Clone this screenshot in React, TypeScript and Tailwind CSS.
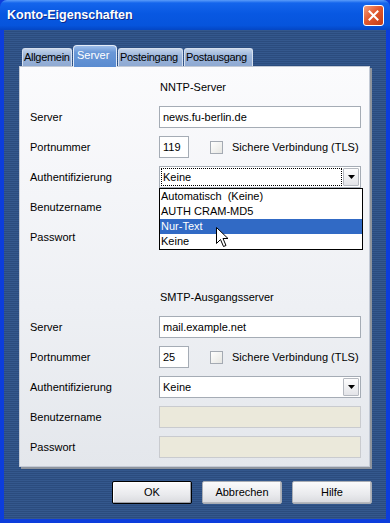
import React from "react";

function Input({ value, w = "w-[202px]", disabled = false }: { value?: string; w?: string; disabled?: boolean }) {
  return (
    <div
      className={`${w} h-[22px] border flex items-center pl-[3px] ${
        disabled ? "bg-[#ebe9db] border-[#c9cbcf]" : "bg-white border-[#a5acb5]"
      }`}
    >
      {value}
    </div>
  );
}

function DropBtn() {
  return (
    <div className="w-[16px] h-[18px] border border-[#b5b9c0] rounded-[1px] bg-[linear-gradient(180deg,#fdfdfd,#e3e4e8)] flex items-center justify-center">
      <svg width="7" height="4" viewBox="0 0 7 4">
        <path d="M0 0 H7 L3.5 4 Z" fill="#000" />
      </svg>
    </div>
  );
}

function Select({ focused = false }: { focused?: boolean }) {
  return (
    <div className="w-[202px] h-[22px] bg-white border border-[#a5acb5] flex items-center p-[1px] gap-[1px]">
      {focused ? (
        <div className="flex-1 h-full border border-dotted border-black flex items-center pl-[1px]">Keine</div>
      ) : (
        <div className="flex-1 h-full flex items-center pl-[2px]">Keine</div>
      )}
      <DropBtn />
    </div>
  );
}

function Checkbox() {
  return (
    <div className="flex items-center ml-[21px]">
      <div className="w-[13px] h-[13px] border border-[#a4aab3] bg-[linear-gradient(135deg,#ffffff,#e6e6e2)]" />
      <span className="ml-[9px]">Sichere Verbindung (TLS)</span>
    </div>
  );
}

function Row({ label, children }: { label?: string; children?: React.ReactNode }) {
  return (
    <div className="h-[22px] flex items-center">
      <div className="w-[129px] shrink-0">{label}</div>
      {children}
    </div>
  );
}

function Cursor() {
  return (
    <svg width="13" height="21" viewBox="0 0 13 21" className="absolute left-[56px] top-[38px]">
      <path
        d="M0.5 0.5 L0.5 16.5 L4.5 12.5 L7.5 19.5 L10 18.5 L7 11.5 L12 11.5 Z"
        fill="#fff"
        stroke="#000"
        strokeWidth="1"
        strokeLinejoin="miter"
      />
    </svg>
  );
}

function Tab({ label, w, selected = false }: { label: string; w: string; selected?: boolean }) {
  if (selected) {
    return (
      <div
        className={`${w} h-[22px] mb-[-1px] relative z-10 rounded-t-[4px] border border-b-0 border-[#e4ecf8] bg-[linear-gradient(180deg,#9cbdea_0%,#6a98d8_30%,#5a8bd0_100%)] text-white flex items-start pt-[3px] pl-[3px] whitespace-nowrap`}
      >
        {label}
      </div>
    );
  }
  return (
    <div
      className={`${w} h-[18px] rounded-t-[3px] border border-b-0 border-[#d6e0ef] bg-[linear-gradient(180deg,#c3d3ea_0%,#9fb8dc_35%,#8ea9d2_100%)] text-black flex items-start pt-[2px] pl-[1px] whitespace-nowrap tracking-[-0.3px] overflow-visible`}
    >
      {label}
    </div>
  );
}

function Btn({ label, def = false }: { label: string; def?: boolean }) {
  return (
    <div
      className={`w-[80px] h-[23px] rounded-[2px] flex items-center justify-center bg-[linear-gradient(180deg,#fbfbfc,#e9eaed_60%,#d9dade)] ${
        def ? "border border-black shadow-[inset_1px_1px_0_#ffffff,inset_-1px_-1px_0_#9a9ea6]" : "border border-[#a9adb4] shadow-[inset_-1px_-1px_0_#b5b8be]"
      }`}
    >
      {label}
    </div>
  );
}

export default function App() {
  return (
    <div className="w-[390px] h-[523px] flex flex-col [font-family:'Liberation_Sans',Arial,sans-serif] text-[11px] leading-[13px] text-black select-none bg-[#0c3ddc]">
      {/* Title bar */}
      <div className="h-[30px] shrink-0 rounded-t-[7px] bg-[linear-gradient(180deg,#5a9cfa_0%,#1465ec_10%,#0858e2_45%,#0654dc_85%,#0446c4_100%)] flex items-center justify-between pl-[7px] pr-[6px]">
        <span className="text-white font-bold text-[12.5px] leading-[16px] [text-shadow:1px_1px_0_#0a2a8e]">
          Konto-Eigenschaften
        </span>
        <div className="w-[21px] h-[21px] rounded-[3px] border border-white bg-[linear-gradient(135deg,#f3a07f_0%,#e2592f_45%,#c23c16_100%)] flex items-center justify-center">
          <svg width="11" height="11" viewBox="0 0 11 11">
            <path d="M1.5 1.5 L9.5 9.5 M9.5 1.5 L1.5 9.5" stroke="#fff" strokeWidth="2" strokeLinecap="square" />
          </svg>
        </div>
      </div>

      {/* Client */}
      <div className="flex-1 border-x-4 border-b-4 border-[#0c3ddc] bg-[repeating-linear-gradient(180deg,#34588d_0px,#34588d_1px,#2b4c7e_1px,#2b4c7e_2px)] flex flex-col pl-[15px] pr-[14px] pt-[15px]">
        {/* Tabs */}
        <div className="h-[21px] flex items-end gap-[1px] pl-[3px]">
          <Tab label="Allgemein" w="w-[50px]" />
          <Tab label="Server" w="w-[44px]" selected />
          <Tab label="Posteingang" w="w-[65px]" />
          <Tab label="Postausgang" w="w-[69px]" />
        </div>

        {/* Panel */}
        <div className="w-[351px] h-[401px] relative border border-[#c3cad6] bg-[linear-gradient(180deg,#fbfbfd_0%,#eef0f4_60%,#e4e7ec_100%)] shadow-[2px_2px_0_#8e949d] pt-[9px] pl-[10px] pr-[8px] pb-[8px] flex flex-col gap-[8px]">
          <Row>
            <span className="pl-[1px]">NNTP-Server</span>
          </Row>
          <Row label="Server">
            <Input value="news.fu-berlin.de" />
          </Row>
          <Row label="Portnummer">
            <Input value="119" w="w-[30px]" />
            <Checkbox />
          </Row>
          <Row label="Authentifizierung">
            <div className="relative">
              <Select focused />
              <div className="absolute left-0 top-full w-[204px] z-20 bg-white border border-black flex flex-col">
                <div className="h-[15px] flex items-center pl-[1px]">Automatisch&nbsp; (Keine)</div>
                <div className="h-[15px] flex items-center pl-[1px]">AUTH CRAM-MD5</div>
                <div className="h-[15px] flex items-center pl-[1px] bg-[#316ac5] text-white">Nur-Text</div>
                <div className="h-[15px] flex items-center pl-[1px]">Keine</div>
                <Cursor />
              </div>
            </div>
          </Row>
          <Row label="Benutzername">
            <Input />
          </Row>
          <Row label="Passwort">
            <Input />
          </Row>
          <Row />
          <Row>
            <span className="pl-[1px]">SMTP-Ausgangsserver</span>
          </Row>
          <Row label="Server">
            <Input value="mail.example.net" />
          </Row>
          <Row label="Portnummer">
            <Input value="25" w="w-[30px]" />
            <Checkbox />
          </Row>
          <Row label="Authentifizierung">
            <Select />
          </Row>
          <Row label="Benutzername">
            <Input disabled />
          </Row>
          <Row label="Passwort">
            <Input disabled />
          </Row>
        </div>

        {/* Buttons */}
        <div className="mt-[14px] flex justify-end gap-[10px]">
          <Btn label="OK" def />
          <Btn label="Abbrechen" />
          <Btn label="Hilfe" />
        </div>
      </div>
    </div>
  );
}
